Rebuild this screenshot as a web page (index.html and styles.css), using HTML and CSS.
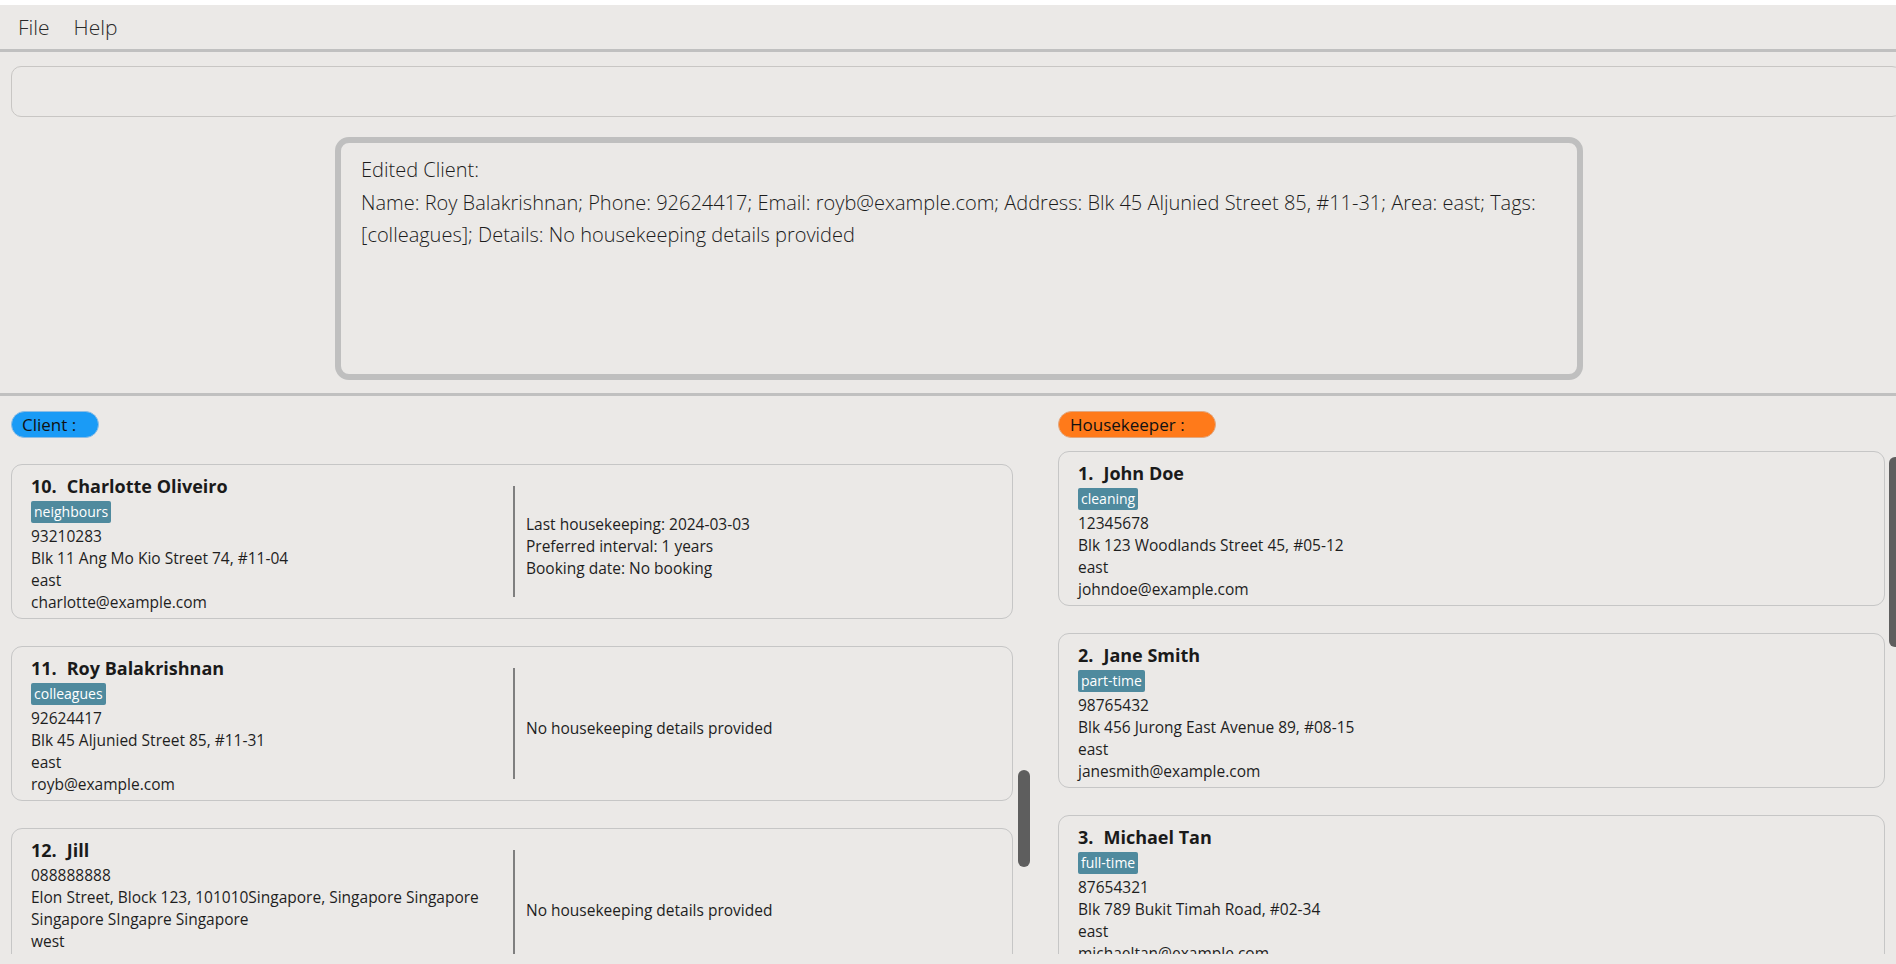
FILE: index.html
```html
<!DOCTYPE html>
<html>
<head>
<meta charset="utf-8">
<link rel="stylesheet" href="styles.css">
</head>
<body>
<div class="app">
  <div class="topstrip"></div>
  <div class="menubar">
    <span class="menu-item">File</span>
    <span class="menu-item">Help</span>
  </div>
  <div class="hsep"></div>
  <div class="command-row">
    <div class="command-box"></div>
  </div>
  <div class="result-row">
    <div class="result-box">
      <div class="result-line">Edited Client:</div>
      <div class="result-line">Name: Roy Balakrishnan; Phone: 92624417; Email: royb@example.com; Address: Blk 45 Aljunied Street 85, #11-31; Area: east; Tags: [colleagues]; Details: No housekeeping details provided</div>
    </div>
  </div>
  <div class="hsep lists-sep"></div>
  <div class="lists">
    <section class="pane pane-client">
      <div class="pill pill-client">Client :</div>
      <div class="list-view">
        <div class="cards cards-client">
          <div class="card">
            <div class="info">
              <div class="name"><span class="idx">10.</span>Charlotte Oliveiro</div>
              <div class="tags"><span class="tag">neighbours</span></div>
              <div class="line">93210283</div>
              <div class="line">Blk 11 Ang Mo Kio Street 74, #11-04</div>
              <div class="line">east</div>
              <div class="line">charlotte@example.com</div>
            </div>
            <div class="divider"></div>
            <div class="details">
              <div class="line">Last housekeeping: 2024-03-03</div>
              <div class="line">Preferred interval: 1 years</div>
              <div class="line">Booking date: No booking</div>
            </div>
          </div>
          <div class="card">
            <div class="info">
              <div class="name"><span class="idx">11.</span>Roy Balakrishnan</div>
              <div class="tags"><span class="tag">colleagues</span></div>
              <div class="line">92624417</div>
              <div class="line">Blk 45 Aljunied Street 85, #11-31</div>
              <div class="line">east</div>
              <div class="line">royb@example.com</div>
            </div>
            <div class="divider"></div>
            <div class="details">
              <div class="line">No housekeeping details provided</div>
            </div>
          </div>
          <div class="card">
            <div class="info">
              <div class="name"><span class="idx">12.</span>Jill</div>
              <div class="line">088888888</div>
              <div class="line">Elon Street, Block 123, 101010Singapore, Singapore Singapore Singapore SIngapre Singapore</div>
              <div class="line">west</div>
              <div class="line">jill@example.com</div>
            </div>
            <div class="divider"></div>
            <div class="details">
              <div class="line">No housekeeping details provided</div>
            </div>
          </div>
        </div>
        <div class="scroll-track scroll-client"><div class="thumb"></div></div>
      </div>
    </section>
    <section class="pane pane-hk">
      <div class="pill pill-hk">Housekeeper :</div>
      <div class="list-view">
        <div class="cards cards-hk">
          <div class="card">
            <div class="info">
              <div class="name"><span class="idx">1.</span>John Doe</div>
              <div class="tags"><span class="tag">cleaning</span></div>
              <div class="line">12345678</div>
              <div class="line">Blk 123 Woodlands Street 45, #05-12</div>
              <div class="line">east</div>
              <div class="line">johndoe@example.com</div>
            </div>
          </div>
          <div class="card">
            <div class="info">
              <div class="name"><span class="idx">2.</span>Jane Smith</div>
              <div class="tags"><span class="tag">part-time</span></div>
              <div class="line">98765432</div>
              <div class="line">Blk 456 Jurong East Avenue 89, #08-15</div>
              <div class="line">east</div>
              <div class="line">janesmith@example.com</div>
            </div>
          </div>
          <div class="card">
            <div class="info">
              <div class="name"><span class="idx">3.</span>Michael Tan</div>
              <div class="tags"><span class="tag">full-time</span></div>
              <div class="line">87654321</div>
              <div class="line">Blk 789 Bukit Timah Road, #02-34</div>
              <div class="line">east</div>
              <div class="line">michaeltan@example.com</div>
            </div>
          </div>
        </div>
        <div class="scroll-track scroll-hk"><div class="thumb"></div></div>
      </div>
    </section>
  </div>
  <div class="bottom-strip"></div>
</div>
</body>
</html>
```

FILE: styles.css
```css
html, body {
  margin: 0;
  padding: 0;
}
body {
  background: #ebe9e7;
  width: 1896px;
  height: 964px;
  overflow: hidden;
  font-family: "Open Sans", "Noto Sans", sans-serif;
  color: #1e1e1e;
}
.app {
  display: flex;
  flex-direction: column;
  height: 964px;
}
.topstrip {
  height: 5px;
  background: #ffffff;
}
.menubar {
  height: 44px;
  display: flex;
  align-items: center;
  padding-left: 18px;
  gap: 24px;
}
.menu-item {
  font-size: 21px;
  font-weight: 300;
  color: #2a2a2a;
}
.hsep {
  height: 3px;
  background: #c0c0c0;
}
.command-row {
  padding: 14px 0 0 11px;
  margin-right: -6px;
}
.command-box {
  height: 49px;
  border: 1px solid #c8c6c4;
  border-radius: 10px;
}
.result-row {
  padding: 20px 0 0 335px;
}
.result-box {
  box-sizing: border-box;
  width: 1248px;
  height: 243px;
  border: 6px solid #bfbfbf;
  border-radius: 14px;
  padding: 11px 16px 0 20px;
  font-size: 20px;
  font-weight: 300;
  line-height: 32.5px;
  color: #1c1c1c;
}
.lists-sep {
  margin-top: 13px;
}
.lists {
  display: flex;
  height: 558px;
  overflow: hidden;
}
.pane {
  display: flex;
  flex-direction: column;
}
.pane-client {
  width: 1047px;
  padding-left: 11px;
  box-sizing: border-box;
}
.pane-hk {
  flex: 1;
  padding-left: 11px;
  min-width: 0;
}
.pill {
  margin-top: 15px;
  height: 27px;
  box-sizing: border-box;
  border-radius: 14px;
  font-size: 17px;
  line-height: 25px;
  color: #111;
  padding-left: 10px;
}
.pill-client {
  width: 88px;
  background: #1a9bf6;
  border: 1px solid #8ebde4;
}
.pill-hk {
  width: 158px;
  background: #ff7a1a;
  border: 1px solid #e2a77f;
  padding-left: 11px;
}
.list-view {
  display: flex;
  flex: 1;
  min-height: 0;
}
.cards {
  display: flex;
  flex-direction: column;
  gap: 27px;
}
.cards-client {
  width: 1002px;
  padding-top: 26px;
}
.cards-hk {
  width: 827px;
  padding-top: 13px;
  flex-shrink: 0;
}
.card {
  box-sizing: border-box;
  height: 155px;
  flex-shrink: 0;
  border: 1px solid #c6c6c6;
  border-radius: 11px;
  display: flex;
  overflow: hidden;
}
.info {
  box-sizing: border-box;
  width: 501px;
  padding: 8px 14px 0 19px;
}
.cards-hk .info {
  width: auto;
}
.name {
  font-size: 18px;
  font-weight: 700;
  line-height: 27px;
  color: #1a1a1a;
}
.idx {
  margin-right: 10px;
}
.tags {
  height: 22px;
  margin: 1px 0 2px;
  display: flex;
}
.tag {
  background: #4f8a9e;
  color: #ffffff;
  font-size: 14px;
  line-height: 22px;
  padding: 0 3px;
  border-radius: 2px;
}
.line {
  font-size: 15.5px;
  line-height: 22px;
  color: #1e1e1e;
}
.divider {
  width: 2px;
  background: #7f7f7f;
  margin: 21px 0;
  flex-shrink: 0;
}
.card:last-child .divider {
  margin-bottom: 0;
}
.details {
  padding-left: 11px;
  padding-top: 8px;
  display: flex;
  flex-direction: column;
  justify-content: center;
}
.scroll-track {
  position: relative;
  flex-shrink: 0;
}
.scroll-client {
  width: 12px;
  margin-left: 5px;
}
.scroll-client .thumb {
  margin-top: 332px;
  height: 97px;
  width: 12px;
  border-radius: 6px;
  background: #5e5e5e;
}
.scroll-hk {
  width: 12px;
  margin-left: 4px;
}
.scroll-hk .thumb {
  margin-top: 19px;
  height: 190px;
  width: 12px;
  border-radius: 6px;
  background: #5e5e5e;
}
.bottom-strip {
  flex: 1;
}
```
